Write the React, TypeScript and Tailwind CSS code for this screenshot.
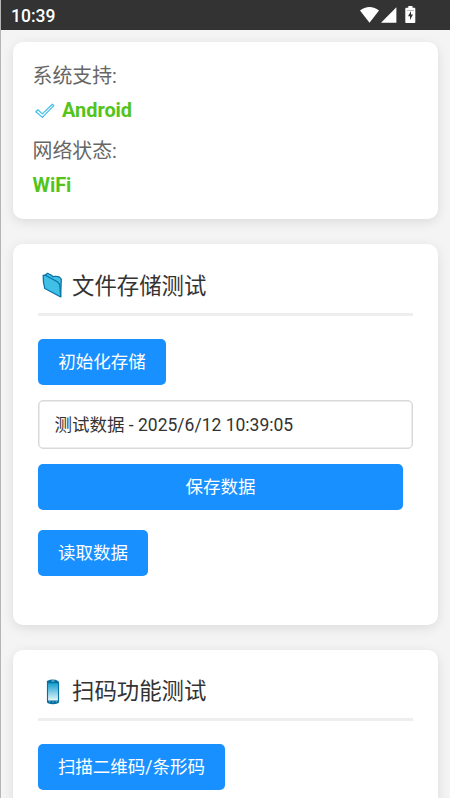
import type { ReactNode } from "react";

function StatusBar() {
  return (
    <header className="flex h-[30px] shrink-0 items-center justify-between bg-[#333] pl-[10px] pr-[34px] text-white">
      <span className="pt-[2px] text-[17.500px] font-medium leading-[28px]">10:39</span>
      <div className="flex h-full items-start">
        <svg className="mt-[7px]" width="19" height="16" viewBox="0 0 19 16" fill="currentColor">
          <path d="M0 3.6C5.5-1.2 13.5-1.2 19 3.6L9.5 15.8Z" />
        </svg>
        <svg className="ml-[2px] mt-[7px]" width="16" height="16" viewBox="0 0 16 16" fill="currentColor">
          <path d="M15.4.2V15.8H0Z" />
        </svg>
        <svg className="ml-[8px] mt-[6px]" width="11" height="17" viewBox="0 0 11 17">
          <path fill="currentColor" d="M3.3 0h4.2v1.8h1.7c.7 0 1.1.4 1.1 1.1v13c0 .6-.4 1.1-1.1 1.1H1.4C.7 17 .3 16.5.3 15.9v-13c0-.7.4-1.1 1.1-1.1h1.9Z" />
          <path fill="#333" d="M6 5v3.6h2L5 14V10.2H3Z" />
          <path stroke="#bbb" d="M2 4.5h7" />
        </svg>
      </div>
    </header>
  );
}

function CheckIcon() {
  return (
    <svg width="20" height="16" viewBox="0 0 20 16" fill="none" stroke="#40c0e7" strokeWidth="1.2">
      <path d="M.8 8.7L2.8 6.8 7.3 10.9 17.3 1.2 18.8 2.7 7.4 14.4Z" strokeLinejoin="round" />
    </svg>
  );
}

function FolderIcon() {
  return (
    <svg width="21" height="27" viewBox="0 0 22 28" fill="#40c0e7" stroke="#0873a4" strokeWidth="1.3" strokeLinejoin="round">
      <path d="M3.5 3 5.8 1.2 10 3.2 11.5 4.8 14 4.3 18 5 20.2 7.3 19.6 25.5 4.8 16Z" />
      <path d="M1.2 3.3 3.5 3.2 16.5 10.4 18.6 13.2 19.6 26 3 17.2 1.6 11Z" />
    </svg>
  );
}

function PhoneIcon() {
  return (
    <svg className="ml-[3.500px]" width="14" height="26" viewBox="0 0 15 26" preserveAspectRatio="none">
      <defs>
        <linearGradient id="phone-screen" x1="0" y1="0" x2="0" y2="1">
          <stop offset="0" stopColor="#16a0d0" />
          <stop offset="1" stopColor="#e5f6fb" />
        </linearGradient>
      </defs>
      <path d="M1 2Q7.500-.8 13 2 14 2.600 14 4v18.500q0 1-1 1.700-5.500 2.200-11 0-1-.7-1-1.700V3Q.8 2.400 1 2Z" fill="#0870a0" />
      <path d="M2.200 4.200h10.600v17.300H2.200Z" fill="url(#phone-screen)" />
      <path d="M6 2h3M3.500 22.700h1M7 23h1M10.500 22.700h1" stroke="#8bd5ed" strokeWidth="1" />
    </svg>
  );
}

function SectionTitle({ icon, children, className }: { icon: ReactNode; children: ReactNode; className: string }) {
  return (
    <h2 className={`flex items-start border-b-[3px] border-[#eee] text-[22.400px] font-normal text-[#333] ${className}`}>
      <span className="flex h-[33px] w-[34px] items-center pl-[4px]">{icon}</span>
      {children}
    </h2>
  );
}

function Button({ children, className = "" }: { children: ReactNode; className?: string }) {
  return (
    <button className={`block h-[46px] whitespace-nowrap rounded-[5px] bg-[#1890ff] text-center text-[17.500px] leading-[46px] text-white ${className}`}>
      {children}
    </button>
  );
}

const cardStyle = "rounded-[10px] bg-white shadow-[0_3px_12px_rgba(0,0,0,0.1)]";

export default function App() {
  return (
    <div className="h-[798px] overflow-hidden border-l border-[#b5b5b5] bg-[#f4f4f4] font-['Roboto','Noto_Sans_CJK_SC',sans-serif]">
      <StatusBar />
      <main className="flex flex-col gap-[25px] pl-[12px] pr-[12.500px] pt-[12px]">
        <section className={`h-[177px] pl-[19.500px] pr-[20px] pt-[19.500px] text-[19.900px] leading-[30px] text-[#666] ${cardStyle}`}>
          <p>系统支持:</p>
          <p className="mt-[4px] flex items-center font-bold text-[#52c41a]">
            <span className="w-[29.500px] pl-[2px]"><CheckIcon /></span>Android
          </p>
          <p className="mt-[11px]">网络状态:</p>
          <p className="mt-[4px] font-bold text-[#52c41a]">WiFi</p>
        </section>

        <section className={`h-[381px] px-[25px] pt-[25px] ${cardStyle}`}>
          <SectionTitle className="h-[47px] leading-[35px]" icon={<FolderIcon />}>文件存储测试</SectionTitle>
          <Button className="mt-[23px] w-[128px]">初始化存储</Button>
          <input
            className="mt-[15px] block h-[49px] w-full rounded-[5px] border border-[#d9d9d9] bg-white pb-[2px] pl-[15.500px] pr-[16px] text-[17.500px] text-[#333] shadow-[inset_0_0_0_0.5px_#d9d9d9] outline-none"
            defaultValue="测试数据 - 2025/6/12 10:39:05"
          />
          <Button className="mt-[15px] w-[365px]">保存数据</Button>
          <Button className="mt-[20px] w-[110px]">读取数据</Button>
        </section>

        <section className={`h-[220px] px-[25px] pt-[25px] ${cardStyle}`}>
          <SectionTitle className="h-[46px] leading-[33px]" icon={<PhoneIcon />}>扫码功能测试</SectionTitle>
          <Button className="mt-[23px] w-[187px]">扫描二维码/条形码</Button>
        </section>
      </main>
    </div>
  );
}
